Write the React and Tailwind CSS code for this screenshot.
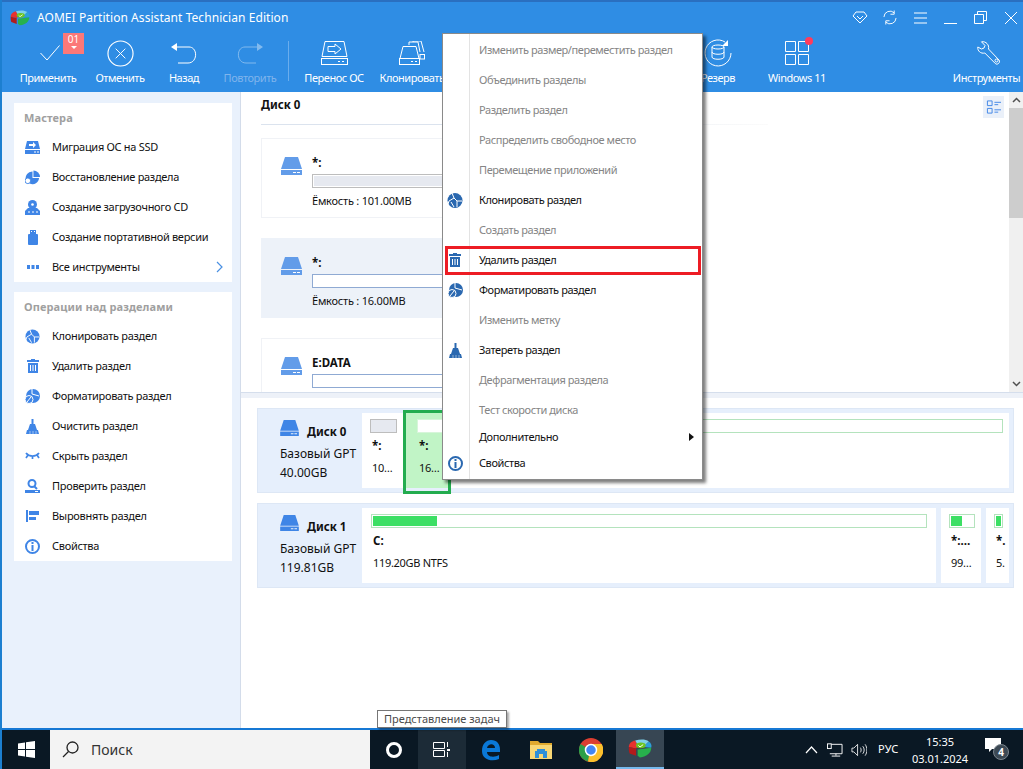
const F = "font-['Noto_Sans','Liberation_Sans',sans-serif]";

function DiskIcon({ className = "w-[21px] h-[18px]", color = "#629ce9" }) {
  return (
    <svg viewBox="0 0 21 18" className={className}>
      <path d="M4 0h13l4 12H0z" fill={color} />
      <rect x="0" y="13" width="21" height="5" fill={color} />
      <rect x="12" y="15" width="3" height="1" fill="#fff" />
      <rect x="16" y="15" width="3" height="1" fill="#fff" />
    </svg>
  );
}

function Logo({ size = 20 }) {
  return (
    <svg width={size} height={size * 0.8} viewBox="0 0 30 24">
      <path d="M1 10c0-4 3-7 8-8l4 7-3 3z" fill="#e8312f" />
      <path d="M1 10l9 2v9l-8-3c-1-2-1-5-1-8z" fill="#b31b1b" />
      <path d="M9 2c6-2 13-2 17 1l-6 6H13z" fill="#7fd0e8" />
      <path d="M26 3c3 2 4 5 3 8l-10-1z" fill="#2d9fd8" />
      <path d="M12 13l17-2c0 6-5 11-14 12l-3-2z" fill="#27b14c" />
      <ellipse cx="16" cy="8" rx="6" ry="3.500" fill="#6cc51f" />
      <path d="M13 8l2 2 4-3" stroke="#fff" strokeWidth="1.200" fill="none" />
    </svg>
  );
}

const s = { fill: "none", stroke: "#fff", strokeWidth: 1 };
const ToolIcons = {
  apply: (
    <svg className="translate-x-[2px]" width="20" height="16" viewBox="0 0 20 16"><path d="M.5 8l6.500 7L19.500 .5" {...s} /></svg>
  ),
  cancel: (
    <svg width="27" height="27" viewBox="0 0 28 28"><circle cx="14" cy="14" r="13" {...s} strokeWidth="1.200" /><path d="M9 9l10 10M19 9L9 19" {...s} /></svg>
  ),
  back: (
    <svg width="26" height="21" viewBox="0 0 26 21"><path d="M6 4h12c9 0 9 16-1 16H7" {...s} /><path d="M0 4l6-4v8z" fill="#fff" /></svg>
  ),
  redo: (
    <svg width="26" height="21" viewBox="0 0 26 21" opacity=".4"><path d="M20 4H8c-9 0-9 16 1 16h10" {...s} /><path d="M26 4l-6-4v8z" fill="#fff" /></svg>
  ),
  migrate: (
    <svg width="27" height="24" viewBox="0 0 27 24"><path d="M4 .5h19l3 15H1z" {...s} /><rect x=".5" y="17.500" width="26" height="6" {...s} /><path d="M7 5.500h7V3l6 5-6 5v-2.500H7z" {...s} /><path d="M17 20.500h2M21 20.500h2" {...s} /></svg>
  ),
  clone: (
    <svg width="26" height="24" viewBox="0 0 26 24"><path d="M10 4V1h9l2 10M14 1V0h8l3 11" {...s} /><path d="M4 5.500h13l3 12H1z" {...s} /><rect x=".5" y="17.500" width="20" height="6" {...s} /><rect x="21" y="13.500" width="4.500" height="4.500" {...s} /><path d="M12 20.500h2M16 20.500h2" {...s} /></svg>
  ),
  backup: (
    <svg width="28" height="28" viewBox="0 0 28 28"><path d="M27 14a13 13 0 1 1-6-11" {...s} /><path d="M24 1v6h-6z" fill="#fff" /><ellipse cx="14" cy="8" rx="6" ry="2" {...s} /><path d="M8 8v10c0 3 12 3 12 0V8M8 13c0 3 12 3 12 0" {...s} /></svg>
  ),
  win: (
    <svg width="24" height="24" viewBox="0 0 24 24"><path d="M.5 .5h10v10H.5zM13.500 .5h10v10h-10zM.5 13.500h10v10H.5zM13.500 13.500h10v10h-10z" {...s} /></svg>
  ),
  tools: (
    <svg className="translate-x-[2px]" width="24" height="24" viewBox="0 0 24 24"><path d="M.8 6c-.5 4 3 7 7 6l10.500 10.500c2 2 5.500-1 3.700-3.500L11.500 8C12.500 4 9 0 4.500 .8L8 4.500 7 7 4.500 8z" {...s} /><circle cx="19.500" cy="19.500" r="1.500" {...s} /></svg>
  ),
};

function ToolItem({ w, icon, label, dim, children }) {
  return (
    <div className={`relative flex flex-col items-center h-full shrink-0 ${dim ? "text-[#7fb4ec]" : "text-white"} ${w}`}>
      <div className="h-[40px] flex items-center justify-center">{icon}</div>
      <div className="text-[11px] leading-[10px] tracking-[-0.45px] whitespace-nowrap">{label}</div>
      {children}
    </div>
  );
}

const b = "currentColor";
const SideIcons = {
  migrate: <svg width="15" height="13" viewBox="0 0 15 13"><path d="M2 0h11l2 8H0z" fill={b} /><rect y="9" width="15" height="4" fill={b} /><path d="M4 3h4V1l3 3-3 3V5H4z" fill="#fff" /><path d="M9 11h2M12 11h2" stroke="#fff" /></svg>,
  restore: <svg width="16" height="15" viewBox="0 0 16 15"><path d="M9 0a7 7 0 0 1 7 7H9z" fill={b} /><path d="M8 1v7h7a7 7 0 0 1-10 6l-1-4H1a7 7 0 0 1 7-9z" fill={b} /><circle cx="3" cy="11" r="3" fill="#fff" stroke={b} /></svg>,
  cd: <svg width="15" height="15" viewBox="0 0 15 15"><circle cx="7.500" cy="4.500" r="4.500" fill={b} /><circle cx="7.500" cy="4.500" r="1.300" fill="#fff" /><path d="M3 8h9l3 3v4H0v-4z" fill={b} /><path d="M3 12h2M7 12h2M11 12h2" stroke="#fff" /></svg>,
  usb: <svg width="10" height="15" viewBox="0 0 10 15"><rect x="2" width="6" height="4" fill={b} /><rect y="4" width="10" height="11" rx="1" fill={b} /><path d="M3.500 1v1M6.500 1v1" stroke="#fff" /></svg>,
  dots: <svg width="12" height="4" viewBox="0 0 12 4"><rect width="3" height="4" fill={b} /><rect x="4.500" width="3" height="4" fill={b} /><rect x="9" width="3" height="4" fill={b} /></svg>,
  clone: <svg width="16" height="15" viewBox="0 0 16 15"><circle cx="8" cy="7.500" r="7.500" fill={b} /><path d="M5 0l2 5-5 3-1 3M10 8h5M10 8v6M7 5l3 3M4 9l3 5" stroke="#fff" fill="none" /></svg>,
  del: <svg width="12" height="14" viewBox="0 0 12 14"><path d="M4 0h4v1h4v2H0V1h4z" fill={b} /><path d="M1 4h10v10H1z" fill={b} /><path d="M3.500 6v6M6 6v6M8.500 6v6" stroke="#fff" /></svg>,
  format: <svg width="15" height="15" viewBox="0 0 15 15"><circle cx="8" cy="7" r="7" fill={b} /><path d="M7 0v5l7 2" stroke="#fff" fill="none" /><circle cx="4" cy="10.500" r="4" fill={b} stroke="#fff" /><path d="M2 13l4-5" stroke="#fff" /></svg>,
  clean: <svg width="13" height="15" viewBox="0 0 13 15"><path d="M5.500 0h2v5h-2z" fill={b} /><path d="M4 5h5l2 6H2z" fill={b} /><path d="M1 11h11l1 4H0z" fill={b} /><path d="M4 12v3M7 12v3M10 12v3" stroke="#fff" strokeWidth=".5" /></svg>,
  hide: <svg width="15" height="8" viewBox="0 0 15 8"><path d="M1 1c3 4 10 4 13 0M3 3L1 6M7.500 4v3M12 3l2 3" stroke={b} strokeWidth="1.700" fill="none" /></svg>,
  check: <svg width="15" height="14" viewBox="0 0 15 14"><circle cx="7" cy="4.500" r="3.500" fill="none" stroke={b} strokeWidth="2" /><path d="M9.500 7.500L12 10" stroke={b} strokeWidth="2" /><rect y="11" width="15" height="3" fill={b} /><rect x="10" y="12" width="3" height="1" fill="#fff" /></svg>,
  align: <svg width="13" height="12" viewBox="0 0 13 12"><rect width="2" height="12" fill={b} /><rect x="3" y="1" width="10" height="4" fill={b} /><rect x="3" y="7" width="7" height="3" fill={b} /></svg>,
  info: <svg width="15" height="15" viewBox="0 0 15 15"><circle cx="7.500" cy="7.500" r="6.500" fill="none" stroke={b} strokeWidth="2" /><rect x="6.500" y="3" width="2" height="2" fill={b} /><rect x="6.500" y="6" width="2" height="6" fill={b} /></svg>,
};

function SideRow({ icon, label, chevron }) {
  return (
    <div className="relative h-[30px] flex items-center pl-[11px]">
      <div className="w-[15px] flex justify-center mr-[12px] text-[#3f85e6]">{icon}</div>
      <span className="text-[11px] tracking-[-0.3px] text-[#111] whitespace-nowrap">{label}</span>
      {chevron && (
        <svg className="absolute right-[9px] top-[9px]" width="7" height="12" viewBox="0 0 7 12"><path d="M1 1l5 5-5 5" fill="none" stroke="#4a90e2" strokeWidth="1.200" /></svg>
      )}
    </div>
  );
}

function SidePanel({ title, children }) {
  return (
    <div className="bg-white">
      <div className="h-[29px] pl-[10px] pt-[2px] flex items-center text-[11px] tracking-[0.1px] font-bold text-[#a0a0a0] whitespace-nowrap">{title}</div>
      {children}
    </div>
  );
}

function DiskCard({ name, cap, filled, active, className = "h-[80px]" }) {
  return (
    <div className={`flex shrink-0 w-[440px] pt-[18px] pl-[19px] border border-r-0 ${active ? "bg-[#edf2f9] border-[#edf2f9]" : "bg-white border-[#f0f2f6]"} ${className}`}>
      <DiskIcon />
      <div className="ml-[10px] flex-1 min-w-0">
        <div className="text-[11.500px] leading-[11px] font-bold text-[#111] h-[17px]">{name}</div>
        <div className={`h-[14px] border border-r-0 p-[1px] pr-0 ${filled ? "border-[#bdbdbd]" : "border-[#8faad3] bg-white"}`}>
          {filled && <div className="h-full bg-[#e6e9f0]" />}
        </div>
        {cap && <div className="mt-[6px] text-[11px] tracking-[-0.22px] leading-[14px] text-[#111] whitespace-nowrap">{cap}</div>}
      </div>
    </div>
  );
}

function Part({ width, name, size, fill, barClass = "w-full", selected, children }) {
  return (
    <div className={`relative shrink-0 pt-[6px] ${width} ${selected ? "bg-[#c1f4c6]" : "bg-white"}`}>
      <div className={`h-[14px] border p-[1px] ${barClass} ${selected ? "border-[#d7f5da] bg-white" : "border-[#b4e3bd]"}`}>
        {fill && <div className={`h-full bg-[#3cdf64] ${fill}`} />}
      </div>
      <div className="ml-[2px] mt-[6px] text-[11.500px] font-bold leading-[14px] text-[#111] whitespace-nowrap">{name}</div>
      <div className="ml-[2px] mt-[8px] text-[11px] tracking-[-0.3px] leading-[14px] text-[#111] whitespace-nowrap">{size}</div>
      {children}
    </div>
  );
}

function DiskLabel({ name, size }) {
  return (
    <div className="w-[104px] shrink-0 pl-[22px] pt-[7px] text-[#111]">
      <div className="flex items-start h-[20px]">
        <DiskIcon className="w-[19px] h-[16px]" color="#3f85e6" />
        <span className="ml-[8px] mt-[4px] text-[11.500px] leading-[16px] font-bold whitespace-nowrap">{name}</span>
      </div>
      <div className="mt-[4px] text-[12px] leading-[19px] whitespace-nowrap">Базовый GPT</div>
      <div className="text-[12px] leading-[19px]">{size}</div>
    </div>
  );
}

const menu = [
  ["Изменить размер/переместить раздел", 0],
  ["Объединить разделы", 0],
  ["Разделить раздел", 0],
  ["Распределить свободное место", 0],
  ["Перемещение приложений", 0],
  ["Клонировать раздел", 1, "clone"],
  ["Создать раздел", 0],
  ["Удалить раздел", 1, "del"],
  ["Форматировать раздел", 1, "format"],
  ["Изменить метку", 0],
  ["Затереть раздел", 1, "clean"],
  ["Дефрагментация раздела", 0],
  ["Тест скорости диска", 0],
];

export default function App() {
  return (
    <div className={`relative w-[1023px] h-[769px] overflow-hidden flex flex-col pl-[2px] bg-[#1c7fd0] ${F}`}>
      {/* header */}
      <div className="h-[92px] shrink-0 bg-[#2f8de4] border-t-2 border-t-[#2a6fc0] flex flex-col">
        <div className="h-[31px] flex items-center pl-[8px] shrink-0">
          <Logo />
          <span className="ml-[7px] text-white text-[12px] tracking-[0.06px]">AOMEI Partition Assistant Technician Edition</span>
          <div className="ml-auto flex items-center pr-[6px]">
            <svg width="16" height="13" viewBox="0 0 16 13"><path d="M4 1h8l3 4-7 7-7-7zM5 5l3 3 3-3" {...s} /></svg>
            <svg className="ml-[15px]" width="14" height="15" viewBox="0 0 15 15"><path d="M1 7a6.500 6.500 0 0 1 11-4.500M14 8a6.500 6.500 0 0 1-11 4.500" {...s} /><path d="M12 0v4H8M3 15v-4h4" {...s} /></svg>
            <svg className="ml-[17px]" width="13" height="12" viewBox="0 0 13 12"><path d="M0 1h13M0 6h13M0 11h13" {...s} /></svg>
            <svg className="ml-[17px]" width="13" height="12" viewBox="0 0 13 12"><path d="M0 11.500h13" {...s} /></svg>
            <svg className="ml-[17px]" width="13" height="13" viewBox="0 0 13 13"><path d="M.5 3.500h9v9h-9zM3.500 3V.5h9v9h-3" {...s} /></svg>
            <svg className="ml-[18px]" width="12" height="12" viewBox="0 0 12 12"><path d="M0 0l12 12M12 0L0 12" {...s} /></svg>
          </div>
        </div>
        <div className="flex-1 flex pl-[10px]">
          <ToolItem w="w-[72px]" icon={ToolIcons.apply} label="Применить">
            <div className="absolute left-[51px] top-[0px] w-[21px] h-[21px] bg-[#fb7878] text-white text-[10px] leading-[13px] text-center">
              01
              <div className="mx-auto w-0 h-0 border-x-[3px] border-x-transparent border-t-[3px] border-t-white" />
            </div>
          </ToolItem>
          <ToolItem w="w-[72px]" icon={ToolIcons.cancel} label="Отменить" />
          <ToolItem w="w-[56px]" icon={ToolIcons.back} label="Назад" />
          <ToolItem w="w-[76px]" dim icon={ToolIcons.redo} label="Повторить" />
          <div className="w-px h-[40px] mt-[8px] bg-[#6aaded] shrink-0" />
          <div className="w-[7px] shrink-0" />
          <ToolItem w="w-[76px]" icon={ToolIcons.migrate} label="Перенос ОС" />
          <ToolItem w="w-[80px]" icon={ToolIcons.clone} label="Клонировать" />
          <div className="w-[228px] shrink-0" />
          <ToolItem w="w-[76px]" icon={ToolIcons.backup} label="Резерв" />
          <ToolItem w="w-[82px]" icon={ToolIcons.win} label="Windows 11">
            <div className="absolute left-[49px] top-[4px] w-[8px] h-[8px] rounded-full bg-[#ff3b5c]" />
          </ToolItem>
          <div className="w-[112px] shrink-0" />
          <ToolItem w="w-[73px]" icon={ToolIcons.tools} label="Инструменты" />
        </div>
      </div>

      <div className="flex flex-1 min-h-0 bg-white">
        {/* sidebar */}
        <div className="w-[239px] shrink-0 bg-[#e9f1fc] border-r border-r-[#d3dcea] pl-[12px] pr-[8px] pt-[11px] flex flex-col gap-[10px]">
          <SidePanel title="Мастера">
            <SideRow icon={SideIcons.migrate} label="Миграция ОС на SSD" />
            <SideRow icon={SideIcons.restore} label="Восстановление раздела" />
            <SideRow icon={SideIcons.cd} label="Создание загрузочного CD" />
            <SideRow icon={SideIcons.usb} label="Создание портативной версии" />
            <SideRow icon={SideIcons.dots} label="Все инструменты" chevron />
          </SidePanel>
          <SidePanel title="Операции над разделами">
            <SideRow icon={SideIcons.clone} label="Клонировать раздел" />
            <SideRow icon={SideIcons.del} label="Удалить раздел" />
            <SideRow icon={SideIcons.format} label="Форматировать раздел" />
            <SideRow icon={SideIcons.clean} label="Очистить раздел" />
            <SideRow icon={SideIcons.hide} label="Скрыть раздел" />
            <SideRow icon={SideIcons.check} label="Проверить раздел" />
            <SideRow icon={SideIcons.align} label="Выровнять раздел" />
            <SideRow icon={SideIcons.info} label="Свойства" />
          </SidePanel>
        </div>

        {/* main */}
        <div className="flex-1 min-w-0 flex flex-col">
          <div className="h-[301px] shrink-0 flex border-b border-b-[#d5deec]">
            <div className="flex-1 min-w-0 overflow-hidden pl-[20px] relative">
              <div className="h-[32px] pt-[5px] text-[11.500px] leading-[16px] font-bold text-[#111]">Диск 0</div>
              <div className="h-px w-[507px] bg-linear-to-r from-[#dbe3ee] from-[40%] to-[#fbfbfb]" />
              <div className="h-[13px]" />
              <DiskCard name="*:" cap="Ёмкость : 101.00MB" filled />
              <div className="h-[20px]" />
              <DiskCard active name="*:" cap="Ёмкость : 16.00MB" />
              <div className="h-[20px]" />
              <DiskCard name="E:DATA" />
              <div className="absolute right-[5px] top-[4px] w-[21px] h-[22px] bg-[#eaf0f9] flex items-center justify-center">
                <svg width="15" height="16" viewBox="0 0 16 16"><path d="M1.500 1.500h5v5h-5zM1.500 9.500h5v5h-5z" fill="none" stroke="#3f85e6" /><path d="M9 3h7M9 5.500h4M9 11h7M9 13.500h4" stroke="#3f85e6" /></svg>
              </div>
            </div>
            {/* scrollbar */}
            <div className="w-[14px] shrink-0 bg-[#f0f0f0] flex flex-col">
              <div className="h-[16px] flex items-center justify-center">
                <svg width="9" height="6" viewBox="0 0 9 6"><path d="M1 5l3.500-3.500L8 5" fill="none" stroke="#505050" strokeWidth="1.500" /></svg>
              </div>
              <div className="h-[110px] bg-[#cdcdcd]" />
              <div className="flex-1" />
              <div className="h-[16px] flex items-center justify-center">
                <svg width="9" height="6" viewBox="0 0 9 6"><path d="M1 1l3.500 3.500L8 1" fill="none" stroke="#505050" strokeWidth="1.500" /></svg>
              </div>
            </div>
          </div>
          <div className="h-[5px] shrink-0 bg-[#edf1f8]" />

          {/* lower */}
          <div className="flex-1 min-h-0 pl-[16px] pr-[9px] pt-[10px] flex flex-col gap-[10px]">
            <div className="h-[85px] flex bg-[#e6effc] border border-[#dde7f5] pr-[4px] py-[4px] shrink-0">
              <DiskLabel name="Диск 0" size="40.00GB" />
              <div className="flex-1 flex bg-white">
                <Part width="w-[42px] pl-[8px]" name="*:" size="10…" barClass="w-[27px] !border-[#bdbdbd] bg-[#e6e9f0]" />
                <Part width="w-[46px] pl-[13px]" selected name="*:" size="16…" barClass="w-[27px]">
                  <div className="absolute -left-[1px] -right-[1px] -top-[3px] -bottom-[6px] border-[3px] border-[#23ac4f]" />
                </Part>
                <div className="flex-1 pl-[9px] pr-[6px] pt-[6px]">
                  <div className="h-[14px] border border-[#b4e3bd]" />
                </div>
              </div>
            </div>

            <div className="h-[85px] flex bg-[#e6effc] border border-[#dde7f5] pr-[4px] py-[4px] shrink-0">
              <DiskLabel name="Диск 1" size="119.81GB" />
              <div className="flex-1 flex gap-[5px]">
                <Part width="flex-1 px-[9px]" name="C:" size="119.20GB NTFS" fill="w-[64px]" />
                <Part width="w-[40px] px-[8px]" name="*:…" size="99…" barClass="w-[26px]" fill="w-[11px]" />
                <Part width="w-[23px] pl-[8px]" name="*." size="5." barClass="w-[9px]" fill="w-[5px]" />
              </div>
            </div>
          </div>
        </div>
      </div>

      {/* taskbar */}
      <div className="h-[41px] shrink-0 bg-[#0a1824] border-t-2 border-t-[#1678d4] flex items-center text-white">
        <div className="w-[48px] flex justify-center">
          <svg width="17" height="17" viewBox="0 0 17 17"><path d="M0 2.500l7-1v6.500H0zM8 1.300L17 0v8H8zM0 9h7v6.500l-7-1zM8 9h9v8l-9-1.300z" fill="#fff" /></svg>
        </div>
        <div className="w-[320px] h-[39px] bg-[#f3f3f3] flex items-center pl-[12px] text-[#333]">
          <svg width="17" height="17" viewBox="0 0 17 17"><circle cx="10.500" cy="6.500" r="5.500" fill="none" stroke="#222" strokeWidth="1.300" /><path d="M6.500 10.500L1 16" stroke="#222" strokeWidth="1.300" /></svg>
          <span className="ml-[12px] text-[14px]">Поиск</span>
        </div>
        <div className="w-[48px] flex justify-center">
          <div className="w-[16px] h-[16px] rounded-full border-[3px] border-white" />
        </div>
        <div className="w-[48px] h-[39px] bg-[#1c2b37] flex items-center justify-center">
          <svg width="18" height="15" viewBox="0 0 18 15"><path d="M.5 .5h11v6H.5zM.5 8.500h11v6H.5z" fill="none" stroke="#fff" /><path d="M14 0h1v5h-1zM14 7h3v2h-3zM14 10h1v5h-1z" fill="#fff" /></svg>
        </div>
        <div className="w-[50px] flex justify-center">
          <svg width="20" height="22" viewBox="0 0 20 22"><path d="M1 12C1 5 5 1 10 1c6 0 9 4 9 10v2H6c0 5 7 6 12 3v4c-7 3-17 1-17-8zM6 9h8c0-5-7-5-8 0z" fill="#0a78d7" /></svg>
        </div>
        <div className="w-[50px] flex justify-center">
          <svg width="22" height="20" viewBox="0 0 22 20"><path d="M0 1h8l2 2h12v3H0z" fill="#e0a92e" /><path d="M0 5h22v14H0z" fill="#f8d775" /><path d="M7 9h8v2h2v7H5v-7h2z" fill="#2e8fd8" /><path d="M9 14h4v4H9z" fill="#f8d775" /></svg>
        </div>
        <div className="w-[50px] flex justify-center">
          <svg width="24" height="24" viewBox="0 0 24 24"><circle cx="12" cy="12" r="12" fill="#dc3e31" /><path d="M12 12L1.500 6A12 12 0 0 0 9 23.600z" fill="#2d9f48" /><path d="M12 6h10.600A12 12 0 0 1 9 23.600z" fill="#fbc02d" /><circle cx="12" cy="12" r="5.500" fill="#4286f5" stroke="#fff" strokeWidth="1.500" /></svg>
        </div>
        <div className="w-[48px] h-[39px] bg-[#374653] border-b-2 border-b-[#76b9ed] flex items-center justify-center"><Logo size={24} /></div>
        <div className="flex-1" />
        <svg className="mr-[9px]" width="13" height="8" viewBox="0 0 13 8"><path d="M1 7l5.500-6L12 7" fill="none" stroke="#fff" strokeWidth="1.200" /></svg>
        <svg className="mr-[8px]" width="16" height="15" viewBox="0 0 17 15"><path d="M3 2h13v10H3M9.500 12v2M5 14.500h9" fill="none" stroke="#fff" /><rect x=".5" y="1.500" width="4" height="5" fill="#0a1824" stroke="#fff" /></svg>
        <svg className="mr-[11px]" width="16" height="14" viewBox="0 0 17 14"><path d="M1 5h2l4-4v12l-4-4H1zM10 4.500c1 1.500 1 3.500 0 5M12.500 3c2 2 2 6 0 8M15 1c2.500 3.500 2.500 8.500 0 12" fill="none" stroke="#fff" strokeWidth=".9" /></svg>
        <span className="w-[22px] text-[11px] mr-[11px] tracking-[0.3px]">РУС</span>
        <div className="w-[58px] text-center text-[11px] leading-[17px] mr-[16px]">
          <div>15:35</div>
          <div>03.01.2024</div>
        </div>
        <div className="relative w-[30px] mr-[8px] h-[25px]">
          <svg className="absolute left-0 top-[1px]" width="17" height="15" viewBox="0 0 17 15"><path d="M0 0h16v11H7l-3 3v-3H0z" fill="#fff" /></svg>
          <div className="absolute left-[8px] top-[7px] w-[16px] h-[16px] rounded-full bg-[#3c4954] border border-[#7b858e] text-[10px] font-bold leading-[14px] text-center">4</div>
        </div>
      </div>

      {/* tooltip */}
      <div className="absolute left-[377px] top-[710px] w-[130px] h-[18px] bg-white border border-[#767676] text-[11px] leading-[16px] text-[#4a4a4a] text-center shadow-[2px_2px_2px_rgba(0,0,0,0.35)] whitespace-nowrap">
        Представление задач
      </div>

      {/* context menu */}
      <div className="absolute left-[442px] top-[33px] w-[261px] h-[447px] bg-white border border-[#8a8a8a] shadow-[3px_3px_3px_rgba(0,0,0,0.5)] py-[1px] tracking-[-0.42px]">
        <div className="absolute left-[26px] top-0 bottom-0 w-px bg-[#e3e3e3]" />
        {menu.map(([label, on, ic]) => (
          <div key={label} className={`relative h-[30px] flex items-center pl-[36px] text-[11px] whitespace-nowrap ${on ? "text-[#111]" : "text-[#858585]"}`}>
            {ic && <div className="absolute left-[4px] w-[16px] flex justify-center text-[#2a68b0]">{SideIcons[ic]}</div>}
            {label}
            {ic === "del" && <div className="absolute left-[2px] top-[1px] w-[256px] h-[29px] border-[3px] border-[#ed1c24]" />}
          </div>
        ))}
        <div className="relative h-[24px] flex items-center pl-[36px] text-[11px] text-[#111]">
          Дополнительно
          <div className="absolute right-[8px] top-[8px] w-0 h-0 border-y-[4px] border-y-transparent border-l-[5px] border-l-[#111]" />
        </div>
        <div className="relative h-[28px] flex items-center pl-[36px] text-[11px] text-[#111]">
          <div className="absolute left-[4px] w-[16px] flex justify-center text-[#2a68b0]">{SideIcons.info}</div>
          Свойства
        </div>
      </div>
    </div>
  );
}
